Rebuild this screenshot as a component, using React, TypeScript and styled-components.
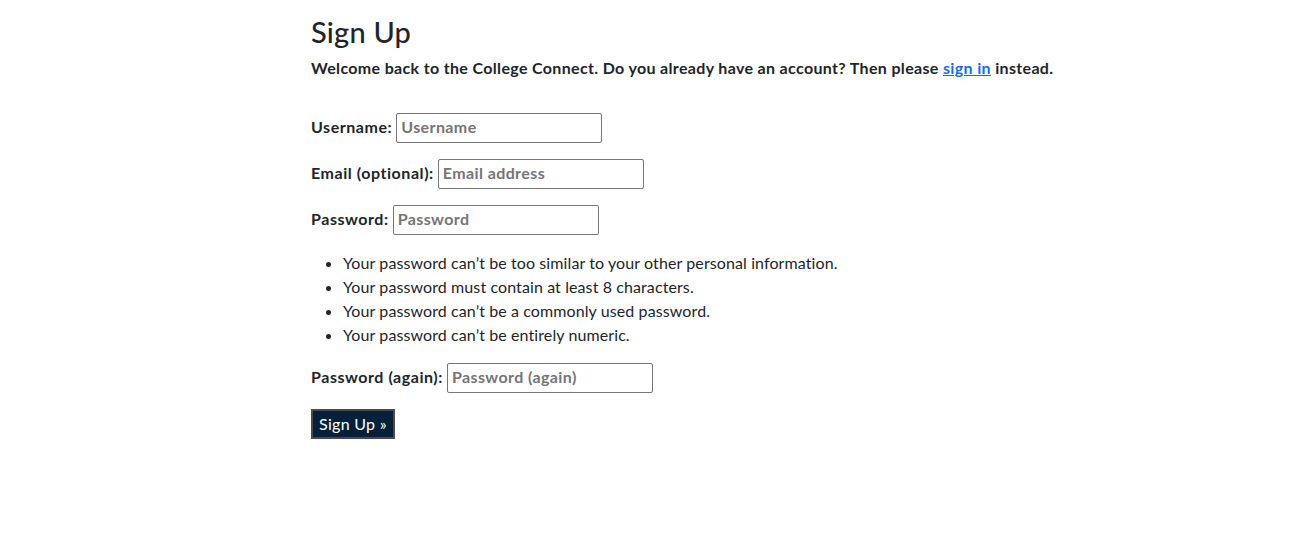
import React from "react";
import styled, { createGlobalStyle } from "styled-components";

const Global = createGlobalStyle`
  html, body { margin: 0; padding: 0; background: #fff; }
  body {
    font-family: Lato, "Liberation Sans", sans-serif;
    color: #212529;
    font-size: 16px;
  }
  * { box-sizing: border-box; }
`;

const Page = styled.main`
  padding: 14px 0 0 311px;
  display: flex;
  flex-direction: column;
`;

const Title = styled.h1`
  margin: 0;
  font-size: 29px;
  line-height: 36px;
  font-weight: 500;
  letter-spacing: 0.2px;
`;

const Lead = styled.p`
  margin: 6px 0 0;
  font-weight: 700;
  font-size: 16px;
  line-height: 24px;
  letter-spacing: 0.34px;
`;

const Link = styled.a`
  color: #0d6efd;
  text-decoration: underline;
`;

const Form = styled.form`
  margin-top: 33px;
  display: flex;
  flex-direction: column;
  gap: 16px;
  align-items: flex-start;
`;

const Row = styled.div`
  display: flex;
  align-items: center;
  gap: 4px;
`;

const Label = styled.label`
  font-weight: 700;
  font-size: 16px;
  letter-spacing: 0.55px;
  padding-bottom: 3px;
`;

const Input = styled.input`
  width: 206px;
  height: 30px;
  border: 1px solid #767676;
  border-radius: 2px;
  padding: 0 4px 3px;
  font-family: inherit;
  font-weight: 700;
  font-size: 16px;
  letter-spacing: 0.4px;
  color: #212529;
  &::placeholder { color: #757575; }
`;

const Help = styled.ul`
  margin: 0;
  padding-left: 32px;
  font-size: 16px;
  line-height: 24px;
  letter-spacing: 0.1px;
`;

const Button = styled.button`
  height: 30px;
  padding: 0 6px 2px;
  background: #05203a;
  color: #fff;
  border: 2px solid #4a4a4a;
  font-family: inherit;
  font-size: 16px;
  letter-spacing: 0.3px;
  cursor: pointer;
`;

const fields = [
  { id: "username", label: "Username", placeholder: "Username", type: "text" },
  { id: "email", label: "Email (optional)", placeholder: "Email address", type: "email" },
  { id: "password1", label: "Password", placeholder: "Password", type: "password" },
];

const rules = [
  "Your password can\u2019t be too similar to your other personal information.",
  "Your password must contain at least 8 characters.",
  "Your password can\u2019t be a commonly used password.",
  "Your password can\u2019t be entirely numeric.",
];

export default function App() {
  return (
    <>
      <Global />
      <Page>
        <Title>Sign Up</Title>
        <Lead>
          Welcome back to the College Connect. Do you already have an account? Then please{" "}
          <Link href="#">sign in</Link> instead.
        </Lead>
        <Form onSubmit={(e) => e.preventDefault()}>
          {fields.map((f) => (
            <Row key={f.id}>
              <Label htmlFor={f.id}>{f.label}:</Label>
              <Input id={f.id} type={f.type} placeholder={f.placeholder} />
            </Row>
          ))}
          <Help>
            {rules.map((r) => (
              <li key={r}>{r}</li>
            ))}
          </Help>
          <Row>
            <Label htmlFor="password2">Password (again):</Label>
            <Input id="password2" type="password" placeholder="Password (again)" />
          </Row>
          <Button type="submit">Sign Up »</Button>
        </Form>
      </Page>
    </>
  );
}
